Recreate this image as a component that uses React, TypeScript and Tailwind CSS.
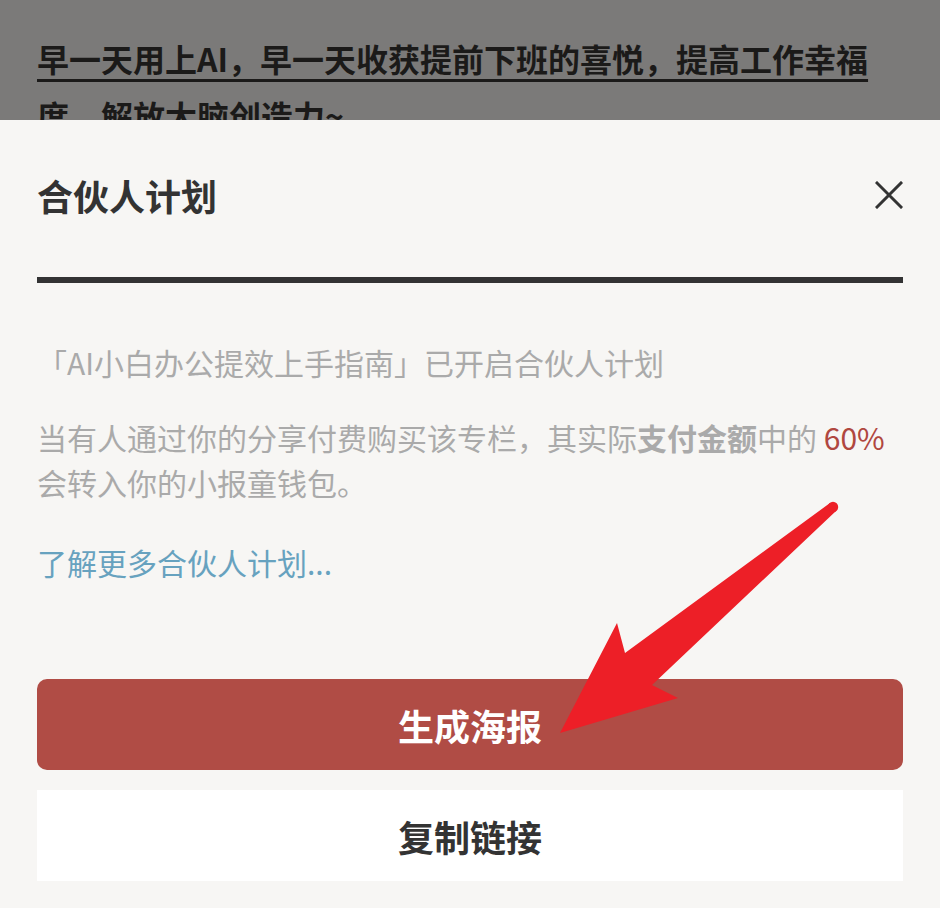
import React from "react";

const font = { fontFamily: '"Noto Sans CJK SC", "Noto Sans", sans-serif' };

function CloseIcon() {
  return (
    <svg width="28" height="28" viewBox="0 0 28 28" aria-hidden="true">
      <path d="M2 2 L26 26 M26 2 L2 26" stroke="#333333" strokeWidth="3" strokeLinecap="square" fill="none" />
    </svg>
  );
}

function Arrow() {
  return (
    <svg className="pointer-events-none absolute left-0 top-0" width="940" height="908" viewBox="0 0 940 908" aria-hidden="true">
      <path d="M830 503 L625 653 L617 623 L560 733 L678 698 L652 685 L836 511 Z" fill="#ed1f27" />
      <circle cx="833" cy="507" r="5.2" fill="#ed1f27" />
    </svg>
  );
}

export default function App() {
  return (
    <div className="relative h-[908px] w-[940px] overflow-hidden bg-[#f7f6f4]" style={font}>
      <div className="h-[120px] overflow-hidden bg-[#7b7a79] px-[37px] pt-[30px]">
        <p className="text-[32px] font-bold leading-[57px] text-[#1b1a19] underline decoration-[3px] underline-offset-[7px]">
          早一天用上AI，早一天收获提前下班的喜悦，提高工作幸福
          <br />
          度，解放大脑创造力~
        </p>
      </div>

      <div className="px-[37px] pt-[52px]">
        <div className="flex h-[45px] items-center justify-between">
          <h2 className="text-[36px] font-bold leading-none text-[#333333]">合伙人计划</h2>
          <button type="button" aria-label="关闭" className="grid h-[28px] w-[28px] place-items-center">
            <CloseIcon />
          </button>
        </div>

        <div className="mt-[60px] h-[6px] bg-[#333333]" />

        <p className="mt-[57px] text-[30px] leading-[45px] text-[#aaaaaa]">「AI小白办公提效上手指南」已开启合伙人计划</p>

        <p className="mt-[30px] text-[30px] leading-[45px] text-[#aaaaaa]">
          当有人通过你的分享付费购买该专栏，其实际<span className="font-bold">支付金额</span>中的{" "}
          <span className="text-[#b0473f]">60%</span>会转入你的小报童钱包。
        </p>

        <p className="mt-[35px] text-[30px] leading-[45px] text-[#67a2bf]">了解更多合伙人计划...</p>

        <button type="button" className="mt-[94px] flex h-[91px] w-full items-center justify-center rounded-[10px] bg-[#b04c45] text-[36px] font-bold text-white">
          生成海报
        </button>
        <button type="button" className="mt-[20px] flex h-[91px] w-full items-center justify-center bg-white text-[36px] font-bold text-[#333333]">
          复制链接
        </button>
      </div>

      <Arrow />
    </div>
  );
}
